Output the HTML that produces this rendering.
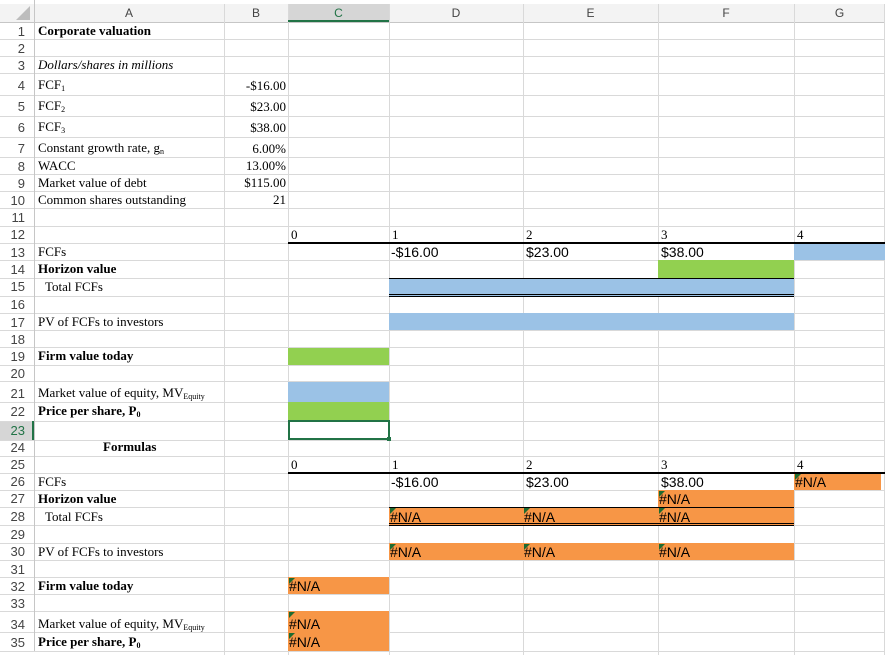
<!DOCTYPE html>
<html><head><meta charset="utf-8"><style>
*{margin:0;padding:0;box-sizing:border-box}
body{width:885px;height:655px;overflow:hidden;background:#fff;position:relative;font-family:"Liberation Serif",serif;font-size:13px;color:#000}
div{position:absolute}
.h{left:0;width:885px;height:1px;background:#d9d9d9}
.v{top:4px;width:1px;height:651px;background:#d9d9d9}
.rn{left:0;width:34px;text-align:right;padding-right:9px;font-family:"Liberation Sans",sans-serif;font-size:13px;color:#444;height:17px;line-height:17px}
.ch{top:4px;height:18px;line-height:18px;text-align:center;font-family:"Liberation Sans",sans-serif;font-size:12px;color:#444}
.t{white-space:nowrap;line-height:16px;height:16px}
.s{font-family:"Liberation Sans",sans-serif;font-size:14px}
.r{text-align:right}
.b{font-weight:bold}
.tri{width:0;height:0;border-top:6px solid #1e6b30;border-right:6px solid transparent}
sub{font-size:8px;vertical-align:-2px}
</style></head><body>
<!-- header bg -->
<div style="left:0;top:0;width:885px;height:22px;background:#f3f3f3"></div>
<div style="left:0;top:0;width:885px;height:4px;background:#fff"></div>
<div style="left:288px;top:4px;width:101px;height:18px;background:#d6d6d6"></div>
<div style="left:16px;top:6px;width:0;height:0;border-left:14px solid transparent;border-bottom:14px solid #bdbdbd"></div>
<div style="left:0;top:421px;width:34px;height:19px;background:#d6d6d6"></div>

<!-- gridlines -->
<div class="h" style="top:22px;background:#c6c6c6"></div>
<div class="h" style="top:39px"></div><div class="h" style="top:56px"></div><div class="h" style="top:73px"></div><div class="h" style="top:95px"></div><div class="h" style="top:116px"></div><div class="h" style="top:137px"></div><div class="h" style="top:157px"></div><div class="h" style="top:174px"></div><div class="h" style="top:191px"></div><div class="h" style="top:208px"></div><div class="h" style="top:226px"></div><div class="h" style="top:243px"></div><div class="h" style="top:260px"></div><div class="h" style="top:278px"></div><div class="h" style="top:296px"></div><div class="h" style="top:313px"></div><div class="h" style="top:330px"></div><div class="h" style="top:347px"></div><div class="h" style="top:365px"></div><div class="h" style="top:381px"></div><div class="h" style="top:402px"></div><div class="h" style="top:421px"></div><div class="h" style="top:440px"></div><div class="h" style="top:456px"></div><div class="h" style="top:473px"></div><div class="h" style="top:490px"></div><div class="h" style="top:507px"></div><div class="h" style="top:525px"></div><div class="h" style="top:543px"></div><div class="h" style="top:560px"></div><div class="h" style="top:577px"></div><div class="h" style="top:594px"></div><div class="h" style="top:611px"></div><div class="h" style="top:632px"></div><div class="h" style="top:651px"></div>
<div class="v" style="left:34px;top:0;background:#c6c6c6"></div><div class="v" style="left:224px"></div><div class="v" style="left:288px"></div><div class="v" style="left:389px"></div><div class="v" style="left:523px"></div><div class="v" style="left:658px"></div><div class="v" style="left:794px"></div><div class="v" style="left:884px"></div>
<div style="left:288px;top:20px;width:101px;height:2px;background:#217346"></div>
<div style="left:32px;top:421px;width:2px;height:19px;background:#217346"></div>

<!-- fills -->
<div style="left:288px;top:348px;width:101px;height:17px;background:#92d050"></div>
<div style="left:288px;top:382px;width:101px;height:20px;background:#9bc2e6"></div>
<div style="left:288px;top:402px;width:101px;height:19px;background:#92d050"></div>
<div style="left:794px;top:244px;width:91px;height:16px;background:#9bc2e6"></div>
<div style="left:658px;top:260px;width:136px;height:18px;background:#92d050"></div>
<div style="left:389px;top:278px;width:405px;height:18px;background:#9bc2e6"></div>
<div style="left:389px;top:313px;width:405px;height:17px;background:#9bc2e6"></div>
<div style="left:794px;top:474px;width:87px;height:16px;background:#f79646"></div>
<div style="left:658px;top:490px;width:136px;height:17px;background:#f79646"></div>
<div style="left:389px;top:507px;width:405px;height:18px;background:#f79646"></div>
<div style="left:389px;top:543px;width:405px;height:17px;background:#f79646"></div>
<div style="left:288px;top:577px;width:101px;height:17px;background:#f79646"></div>
<div style="left:288px;top:611px;width:101px;height:40px;background:#f79646"></div>

<!-- borders -->
<div style="left:288px;top:242px;width:597px;height:2px;background:#000"></div>
<div style="left:288px;top:472px;width:597px;height:2px;background:#000"></div>
<div style="left:389px;top:278px;width:405px;height:1px;background:#000"></div>
<div style="left:389px;top:294px;width:405px;height:1px;background:#000"></div>
<div style="left:389px;top:296px;width:405px;height:1px;background:#000"></div>
<div style="left:389px;top:507px;width:405px;height:1px;background:#000"></div>
<div style="left:389px;top:523px;width:405px;height:1px;background:#000"></div>
<div style="left:389px;top:525px;width:405px;height:1px;background:#000"></div>
<div style="left:288px;top:420px;width:102px;height:20px;border:2px solid #217346"></div>
<div style="left:387px;top:437px;width:4px;height:4px;background:#217346"></div>

<!-- headers -->
<div class="ch" style="left:34px;width:190px">A</div>
<div class="ch" style="left:224px;width:64px">B</div>
<div class="ch" style="left:288px;width:101px;color:#217346">C</div>
<div class="ch" style="left:389px;width:134px">D</div>
<div class="ch" style="left:523px;width:135px">E</div>
<div class="ch" style="left:658px;width:136px">F</div>
<div class="ch" style="left:794px;width:91px">G</div>

<!-- row numbers -->
<div class="rn" style="top:23px">1</div><div class="rn" style="top:40px">2</div><div class="rn" style="top:57px">3</div><div class="rn" style="top:77px">4</div><div class="rn" style="top:98px">5</div><div class="rn" style="top:119px">6</div><div class="rn" style="top:140px">7</div><div class="rn" style="top:158px">8</div><div class="rn" style="top:175px">9</div><div class="rn" style="top:192px">10</div><div class="rn" style="top:209px">11</div><div class="rn" style="top:226px">12</div><div class="rn" style="top:244px">13</div><div class="rn" style="top:261px">14</div><div class="rn" style="top:278px">15</div><div class="rn" style="top:296px">16</div><div class="rn" style="top:314px">17</div><div class="rn" style="top:331px">18</div><div class="rn" style="top:348px">19</div><div class="rn" style="top:365px">20</div><div class="rn" style="top:385px">21</div><div class="rn" style="top:403px">22</div><div class="rn" style="top:422px;color:#217346">23</div><div class="rn" style="top:439px">24</div><div class="rn" style="top:456px">25</div><div class="rn" style="top:473px">26</div><div class="rn" style="top:490px">27</div><div class="rn" style="top:508px">28</div><div class="rn" style="top:526px">29</div><div class="rn" style="top:543px">30</div><div class="rn" style="top:561px">31</div><div class="rn" style="top:578px">32</div><div class="rn" style="top:595px">33</div><div class="rn" style="top:616px">34</div><div class="rn" style="top:634px">35</div>

<!-- column A text -->
<div class="t b" style="left:38px;top:23px">Corporate valuation</div>
<div class="t" style="left:38px;top:57px;font-style:italic">Dollars/shares in millions</div>
<div class="t" style="left:38px;top:77px">FCF<sub>1</sub></div>
<div class="t" style="left:38px;top:98px">FCF<sub>2</sub></div>
<div class="t" style="left:38px;top:119px">FCF<sub>3</sub></div>
<div class="t" style="left:38px;top:140px">Constant growth rate, g<sub>n</sub></div>
<div class="t" style="left:38px;top:158px">WACC</div>
<div class="t" style="left:38px;top:175px">Market value of debt</div>
<div class="t" style="left:38px;top:192px">Common shares outstanding</div>
<div class="t" style="left:38px;top:244px">FCFs</div>
<div class="t b" style="left:38px;top:261px">Horizon value</div>
<div class="t" style="left:45px;top:279px">Total FCFs</div>
<div class="t" style="left:38px;top:314px">PV of FCFs to investors</div>
<div class="t b" style="left:38px;top:348px">Firm value today</div>
<div class="t" style="left:38px;top:385px">Market value of equity, MV<sub>Equity</sub></div>
<div class="t b" style="left:38px;top:403px">Price per share, P<sub>0</sub></div>
<div class="t b" style="left:103px;top:439px">Formulas</div>
<div class="t" style="left:38px;top:474px">FCFs</div>
<div class="t b" style="left:38px;top:491px">Horizon value</div>
<div class="t" style="left:45px;top:509px">Total FCFs</div>
<div class="t" style="left:38px;top:544px">PV of FCFs to investors</div>
<div class="t b" style="left:38px;top:578px">Firm value today</div>
<div class="t" style="left:38px;top:616px">Market value of equity, MV<sub>Equity</sub></div>
<div class="t b" style="left:38px;top:634px">Price per share, P<sub>0</sub></div>

<!-- column B -->
<div class="t r" style="left:224px;width:62px;top:78px">-$16.00</div>
<div class="t r" style="left:224px;width:62px;top:99px">$23.00</div>
<div class="t r" style="left:224px;width:62px;top:120px">$38.00</div>
<div class="t r" style="left:224px;width:62px;top:141px">6.00%</div>
<div class="t r" style="left:224px;width:62px;top:158px">13.00%</div>
<div class="t r" style="left:224px;width:62px;top:175px">$115.00</div>
<div class="t r" style="left:224px;width:62px;top:192px">21</div>

<!-- timeline top -->
<div class="t" style="left:291px;top:227px">0</div>
<div class="t" style="left:392px;top:227px">1</div>
<div class="t" style="left:526px;top:227px">2</div>
<div class="t" style="left:661px;top:227px">3</div>
<div class="t" style="left:797px;top:227px">4</div>
<div class="t s" style="left:391px;top:244px">-$16.00</div>
<div class="t s" style="left:526px;top:244px">$23.00</div>
<div class="t s" style="left:661px;top:244px">$38.00</div>

<!-- timeline bottom -->
<div class="t" style="left:291px;top:457px">0</div>
<div class="t" style="left:392px;top:457px">1</div>
<div class="t" style="left:526px;top:457px">2</div>
<div class="t" style="left:661px;top:457px">3</div>
<div class="t" style="left:797px;top:457px">4</div>
<div class="t s" style="left:391px;top:474px">-$16.00</div>
<div class="t s" style="left:526px;top:474px">$23.00</div>
<div class="t s" style="left:661px;top:474px">$38.00</div>
<div class="t s" style="left:795px;top:474px">#N/A</div>
<div class="t s" style="left:659px;top:491px">#N/A</div>
<div class="t s" style="left:390px;top:509px">#N/A</div>
<div class="t s" style="left:524px;top:509px">#N/A</div>
<div class="t s" style="left:659px;top:509px">#N/A</div>
<div class="t s" style="left:390px;top:544px">#N/A</div>
<div class="t s" style="left:524px;top:544px">#N/A</div>
<div class="t s" style="left:659px;top:544px">#N/A</div>
<div class="t s" style="left:289px;top:578px">#N/A</div>
<div class="t s" style="left:289px;top:616px">#N/A</div>
<div class="t s" style="left:289px;top:634px">#N/A</div>

<!-- error triangles -->
<div class="tri" style="left:795px;top:474px"></div>
<div class="tri" style="left:659px;top:491px"></div>
<div class="tri" style="left:390px;top:508px"></div>
<div class="tri" style="left:524px;top:508px"></div>
<div class="tri" style="left:659px;top:508px"></div>
<div class="tri" style="left:390px;top:544px"></div>
<div class="tri" style="left:524px;top:544px"></div>
<div class="tri" style="left:659px;top:544px"></div>
<div class="tri" style="left:289px;top:578px"></div>
<div class="tri" style="left:289px;top:612px"></div>
<div class="tri" style="left:289px;top:633px"></div>
</body></html>
